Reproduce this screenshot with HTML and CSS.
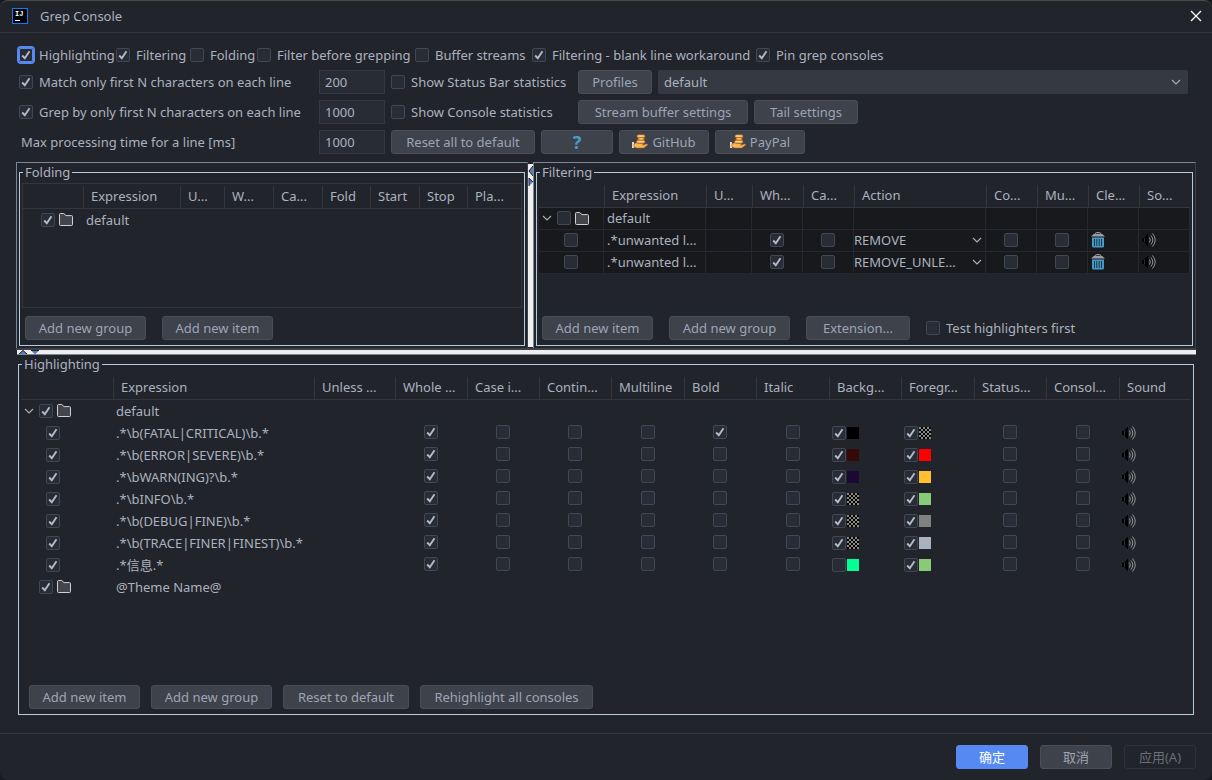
FILE: index.html
```html
<!DOCTYPE html>
<html lang="zh-CN">
<head>
<meta charset="utf-8">
<title>Grep Console</title>
<link rel="stylesheet" href="styles.css">
</head>
<body>
<svg class="sprite" aria-hidden="true">
  <symbol id="folder" viewBox="0 0 14 13"><path d="M.5 1.5a1 1 0 0 1 1-1h3.2L7 2.6h5.5a1 1 0 0 1 1 1v7.9a1 1 0 0 1-1 1h-11a1 1 0 0 1-1-1z" fill="#43454a" stroke="#ced0d6"/></symbol>
  <symbol id="chevron" viewBox="0 0 10 6"><path d="M1 1l4 4 4-4" fill="none" stroke="#a9adb4" stroke-width="1.2"/></symbol>
  <symbol id="trash" viewBox="0 0 14 16"><path d="M4.500 2V1.500q0-1 1-1h3q1 0 1 1V2" fill="none" stroke="#9a9fa3"/><path d="M3 1.800h8l3 2.700H0z" fill="#9a9fa3"/><path d="M1 5.500h12V14q0 1.500-1.500 1.500h-9Q1 15.500 1 14z" fill="#469ac9"/><path d="M3.500 7v7M5.800 7v7M8.200 7v7M10.500 7v7" stroke="#1b3444"/></symbol>
  <symbol id="sound" viewBox="0 0 14 14"><path d="M0 5h2l4-4.500v13L2 9H0z" fill="#000"/><path d="M2.500 5v4" stroke="#4a4c50" stroke-width=".6"/><path d="M7.500 4.500q1.500 2.500 0 5M9 2.500q3.500 4.500 0 9M10.500.5q5.500 6.500 0 13" fill="none" stroke="#b0b1b3" stroke-width=".8"/></symbol>
  <symbol id="coins" viewBox="0 0 16 16"><path d="M1 8v6" stroke="#f6ead8" stroke-width="1.800"/><path d="M2 10q2.500-2 5-.5h3.500q1 .8 0 1.800l4-1.300q1.800 0 .8 1.300L11.500 14H5l-3-1z" fill="#f8b85a" stroke="#b8641b" stroke-width=".6"/><rect x="5" y=".8" width="8" height="2.800" rx="1.400" fill="#f8bd62" stroke="#ab5c18" stroke-width=".6"/><rect x="5.800" y="3.600" width="6.500" height="2.600" rx="1.300" fill="#f0a03a" stroke="#ab5c18" stroke-width=".6"/><rect x="4.500" y="6.200" width="8.500" height="3" rx="1.500" fill="#f8bd62" stroke="#ab5c18" stroke-width=".6"/><path d="M6.500 2h4M7.500 4.800h3M6.500 7.600h4" stroke="#ffe9b8" stroke-width=".8"/></symbol>
</svg>

<div class="dialog">
  <header class="titlebar">
    <svg class="logo" viewBox="0 0 16 16" role="img" aria-label="IntelliJ IDEA"><rect x=".5" y=".5" width="15" height="15" fill="#000" stroke="#087cfa"/><text class="logo-text" x="3" y="8">IJ</text><rect x="3" y="12" width="5" height="1" fill="#fff"/></svg>
    <h1 class="title">Grep Console</h1>
    <button class="close" aria-label="Close"><svg viewBox="0 0 12 12"><path d="M1 1l10 10M11 1L1 11" stroke="#fff" stroke-width="1.300"/></svg></button>
  </header>

  <main class="content">
    <section class="options">
      <div class="switches">
        <label class="check"><input type="checkbox" class="focused" checked>Highlighting</label>
        <label class="check"><input type="checkbox" checked>Filtering</label>
        <label class="check"><input type="checkbox">Folding</label>
        <label class="check"><input type="checkbox">Filter before grepping</label>
        <label class="check"><input type="checkbox">Buffer streams</label>
        <label class="check"><input type="checkbox" checked>Filtering - blank line workaround</label>
        <label class="check"><input type="checkbox" checked>Pin grep consoles</label>
      </div>
      <div class="option-row">
        <label class="check"><input type="checkbox" checked>Match only first N characters on each line</label>
        <input class="field" type="text" value="200" aria-label="Match length">
        <div class="option-rest">
          <label class="check stat"><input type="checkbox">Show Status Bar statistics</label>
          <button class="btn w-s">Profiles</button>
          <span class="combo"><select aria-label="Profile"><option>default</option></select><svg class="chev"><use href="#chevron"/></svg></span>
        </div>
      </div>
      <div class="option-row">
        <label class="check"><input type="checkbox" checked>Grep by only first N characters on each line</label>
        <input class="field" type="text" value="1000" aria-label="Grep length">
        <div class="option-rest">
          <label class="check stat"><input type="checkbox">Show Console statistics</label>
          <button class="btn w-xxl">Stream buffer settings</button>
          <button class="btn w-m">Tail settings</button>
        </div>
      </div>
      <div class="option-row">
        <label class="plain" for="max-time">Max processing time for a line [ms]</label>
        <input class="field" id="max-time" type="text" value="1000">
        <div class="option-rest">
          <button class="btn w-xl">Reset all to default</button>
          <button class="btn w-f help" aria-label="Help">?</button>
          <button class="btn w-icon"><svg class="coins"><use href="#coins"/></svg>GitHub</button>
          <button class="btn w-icon"><svg class="coins"><use href="#coins"/></svg>PayPal</button>
        </div>
      </div>
    </section>

    <div class="split">
      <section class="pane">
        <fieldset class="group">
          <legend>Folding</legend>
          <div class="table-wrap boxed">
            <table class="grid">
              <colgroup><col class="c60"><col><col class="c44"><col class="c49"><col class="c49"><col class="c48"><col class="c49"><col class="c48"><col class="c54"></colgroup>
              <thead><tr><th></th><th>Expression</th><th>U...</th><th>W...</th><th>Ca...</th><th>Fold</th><th>Start</th><th>Stop</th><th>Pla...</th></tr></thead>
              <tbody><tr><td><span class="tree leaf-group"><input type="checkbox" checked aria-label="Enable default"><svg class="folder"><use href="#folder"/></svg></span></td><td colspan="8">default</td></tr></tbody>
            </table>
          </div>
          <div class="actions wide"><button class="btn w-l">Add new group</button><button class="btn w-ml">Add new item</button></div>
        </fieldset>
      </section>
      <div class="divider-v"><svg viewBox="0 0 5 24"><path d="M5 2L1 7l4 5z" fill="#5b7cc4"/><path d="M5 2L1 7l4 5" fill="none" stroke="#222"/><path d="M1 14l4 4-4 4z" fill="#5b7cc4"/><path d="M1 22v-8l4 4" fill="none" stroke="#222"/></svg></div>
      <section class="pane">
        <fieldset class="group">
          <legend>Filtering</legend>
          <div class="table-wrap">
            <table class="grid dark">
              <colgroup><col class="c65"><col><col class="c46"><col class="c51"><col class="c51"><col class="c132"><col class="c51"><col class="c51"><col class="c51"><col class="c51"></colgroup>
              <thead><tr><th></th><th>Expression</th><th>U...</th><th>Wh...</th><th>Ca...</th><th>Action</th><th>Co...</th><th>Mu...</th><th>Cle...</th><th>So...</th></tr></thead>
              <tbody>
                <tr><td><span class="tree"><svg class="chev"><use href="#chevron"/></svg><input type="checkbox" aria-label="Enable default"><svg class="folder"><use href="#folder"/></svg></span></td><td>default</td><td></td><td></td><td></td><td></td><td></td><td></td><td></td><td></td></tr>
                <tr><td class="enable"><input type="checkbox" aria-label="Enable filter 1"></td><td>.*unwanted l...</td><td></td><td class="center"><input type="checkbox" checked aria-label="Whole line"></td><td class="center"><input type="checkbox" aria-label="Case insensitive"></td><td class="flush"><span class="cell-combo"><select aria-label="Action"><option>REMOVE</option></select><svg class="chev"><use href="#chevron"/></svg></span></td><td class="center"><input type="checkbox" aria-label="Continue matching"></td><td class="center"><input type="checkbox" aria-label="Multiline"></td><td><button class="icon-btn" aria-label="Clear console"><svg class="trash"><use href="#trash"/></svg></button></td><td><button class="icon-btn" aria-label="Sound"><svg class="sound"><use href="#sound"/></svg></button></td></tr>
                <tr><td class="enable"><input type="checkbox" aria-label="Enable filter 2"></td><td>.*unwanted l...</td><td></td><td class="center"><input type="checkbox" checked aria-label="Whole line"></td><td class="center"><input type="checkbox" aria-label="Case insensitive"></td><td class="flush"><span class="cell-combo"><select aria-label="Action"><option>REMOVE_UNLE...</option></select><svg class="chev"><use href="#chevron"/></svg></span></td><td class="center"><input type="checkbox" aria-label="Continue matching"></td><td class="center"><input type="checkbox" aria-label="Multiline"></td><td><button class="icon-btn" aria-label="Clear console"><svg class="trash"><use href="#trash"/></svg></button></td><td><button class="icon-btn" aria-label="Sound"><svg class="sound"><use href="#sound"/></svg></button></td></tr>
              </tbody>
            </table>
          </div>
          <div class="actions wide"><button class="btn w-ml">Add new item</button><button class="btn w-l">Add new group</button><button class="btn w-m">Extension...</button><label class="check"><input type="checkbox">Test highlighters first</label></div>
        </fieldset>
      </section>
    </div>
    <div class="divider-h"><svg viewBox="0 0 24 4"><path d="M2 4l4-4 4 4z" fill="#5b7cc4"/><path d="M2 4l4-3.500L10 4" fill="none" stroke="#222"/><path d="M14 .5h8L18 4.500z" fill="#5b7cc4"/><path d="M14 .5h8" stroke="#222"/></svg></div>

    <section class="bottom">
      <fieldset class="group">
        <legend>Highlighting</legend>
        <div class="table-wrap">
          <table class="grid">
            <colgroup><col class="c92"><col><col class="c81"><col class="c72"><col class="c72"><col class="c72"><col class="c73"><col class="c72"><col class="c73"><col class="c72"><col class="c73"><col class="c72"><col class="c73"><col class="c72"></colgroup>
            <thead><tr><th></th><th>Expression</th><th>Unless ...</th><th>Whole ...</th><th>Case i...</th><th>Contin...</th><th>Multiline</th><th>Bold</th><th>Italic</th><th>Backg...</th><th>Foregr...</th><th>Status...</th><th>Consol...</th><th>Sound</th></tr></thead>
            <tbody id="rules">
              <tr><td><span class="tree"><svg class="chev"><use href="#chevron"/></svg><input type="checkbox" checked aria-label="Enable default"><svg class="folder"><use href="#folder"/></svg></span></td><td colspan="13">default</td></tr>
              <tr id="theme"><td><span class="tree leaf-group"><input type="checkbox" checked aria-label="Enable @Theme Name@"><svg class="folder"><use href="#folder"/></svg></span></td><td colspan="13">@Theme Name@</td></tr>
            </tbody>
          </table>
        </div>
        <div class="actions"><button class="btn w-ml">Add new item</button><button class="btn w-l">Add new group</button><button class="btn w-lg">Reset to default</button><button class="btn w-xxxl">Rehighlight all consoles</button></div>
      </fieldset>
    </section>
  </main>

  <footer class="footer">
    <button class="btn w-f primary">确定</button>
    <button class="btn w-f">取消</button>
    <button class="btn w-f" disabled>应用(A)</button>
  </footer>
</div>
<script src="rules.js"></script>
</body>
</html>
```
FILE: styles.css
```css
* { box-sizing: border-box; }

body {
  margin: 0;
  background: #17181b;
  color: #abb2bf;
  font: 13px/18px "Noto Sans", "Noto Sans CJK SC", sans-serif;
}

button, input, select { font: inherit; color: inherit; margin: 0; padding: 0; }
svg { display: block; flex: none; }
.sprite { position: absolute; width: 0; height: 0; }

.dialog {
  display: flex;
  flex-direction: column;
  min-height: 100vh;
  background: #21242b;
  border-top: 1px solid #4a4a46;
  border-radius: 8px;
}

.titlebar {
  display: flex;
  align-items: center;
  gap: 12px;
  height: 32px;
  padding: 0 10px 1px 12px;
  border-bottom: 1px solid #33363d;
}
.logo { width: 16px; height: 16px; }
.logo-text { font: bold 7px "Liberation Mono", monospace; fill: #fff; }
.title { flex: 1; margin: 0; font-size: 13px; line-height: 18px; font-weight: 400; }
.close { padding: 0; border: 0; background: none; }
.close svg { width: 12px; height: 12px; }

.content { flex: 1; display: flex; flex-direction: column; padding: 13px 16px 18px; }

/* Option rows */
.options { display: flex; flex-direction: column; gap: 6px; padding: 0 8px 8px 3px; }
.switches { display: grid; grid-template-columns: 97px 74px 67px 158px 117px 224px 1fr; height: 18px; }
.option-row { display: grid; grid-template-columns: 300px 66px 1fr; height: 24px; align-items: center; }
.option-rest { display: flex; align-items: center; gap: 6px; padding-left: 6px; }
.stat { width: 181px; }
.plain { padding-left: 2px; }
.check { display: flex; align-items: center; gap: 6px; white-space: nowrap; }

input[type="checkbox"] {
  appearance: none;
  flex: none;
  display: block;
  width: 14px;
  height: 14px;
  border: 1px solid #414754;
  border-radius: 2px;
  background: #282c34;
}
input[type="checkbox"]:checked {
  background: #282c34 url("data:image/svg+xml,%3Csvg xmlns='http://www.w3.org/2000/svg' viewBox='0 0 12 12'%3E%3Cpath d='M2.200 6.500L4.800 9.200 9.500 2.200' fill='none' stroke='%23b4bac7' stroke-width='1.900'/%3E%3C/svg%3E") center / 12px 12px no-repeat;
}
input.focused { border-color: #568af2; outline: 2px solid #568af2; }

.field {
  width: 66px;
  height: 24px;
  padding: 0 5px;
  border: 1px solid #333841;
  background: #282c34;
}

.btn {
  display: flex;
  align-items: center;
  justify-content: center;
  gap: 4px;
  flex: none;
  height: 24px;
  border: 1px solid #494e58;
  border-radius: 3px;
  background: #3d424b;
  color: #9da5b4;
  white-space: nowrap;
}
.w-s { width: 74px; }
.w-f { width: 72px; }
.w-icon { width: 90px; }
.w-m { width: 104px; }
.w-ml { width: 111px; }
.w-l { width: 121px; }
.w-lg { width: 126px; }
.w-xl { width: 144px; }
.w-xxl { width: 170px; }
.w-xxxl { width: 173px; }
.help { color: #4a9cc5; font-size: 18px; font-weight: 700; }
.coins { width: 16px; height: 16px; }
.primary { background: #568af2; border-color: #568af2; color: #fff; }
.btn:disabled { background: none; border-color: #2e3138; color: #6a6f78; }

.combo { display: flex; align-items: center; flex: 1; height: 24px; padding-right: 7px; border-radius: 2px; background: #353941; }
.combo select, .cell-combo select { appearance: none; flex: 1; min-width: 0; border: 0; background: none; }
.combo select { padding-left: 6px; }
.cell-combo { display: flex; align-items: center; padding-right: 3px; }
.chev { width: 10px; height: 6px; }

/* Upper split pane */
.split { display: grid; grid-template-columns: 512fr 5px 663fr; border-bottom: 2px solid #3e4045; }
.pane { min-width: 0; padding: 0 2px 2px; border: 1px solid #3e4045; border-top-color: #7b8794; border-left-color: #7b8794; border-bottom: 0; }
.divider-v { margin: 2px 0 1px; background: #eee; }
.divider-v svg { width: 5px; height: 24px; }
.divider-h { height: 5px; margin-left: 1px; background: #eee; border-bottom: 1px solid #7b8794; }
.divider-h svg { width: 24px; height: 4px; }
.bottom { flex: 1; display: flex; padding: 0 2px; }

.group {
  display: flex;
  flex-direction: column;
  flex: 1;
  min-width: 0;
  margin: 0;
  padding: 1px 2px 5px;
  border: 1px solid #b4cbe0;
}
.group legend { height: 19px; margin-left: 1px; padding: 0 2px; line-height: 19px; }
.table-wrap { flex: 1; min-height: 125px; }
.boxed { border: 1px solid #33363d; }
.actions { display: flex; align-items: center; gap: 11px; padding: 8px 8px 0; }
.wide { gap: 16px; padding: 8px 3px 0; }

/* Tables */
.grid { width: 100%; table-layout: fixed; border-collapse: separate; border-spacing: 0; }
.grid th {
  height: 25px;
  padding: 0 0 0 8px;
  border-bottom: 1px solid #33363d;
  background: linear-gradient(#33363d, #33363d) left 2px / 1px 22px no-repeat;
  font-weight: 400;
  text-align: left;
  white-space: nowrap;
}
.grid th:first-child { background: none; }
.grid td { height: 22px; padding: 0 0 1px 3px; white-space: nowrap; }
.grid td.center { padding: 0 0 2px; }
.grid td.center input { margin: 0 auto; }
.grid td.flush { padding: 0 0 1px; }
.dark td { background: #18191d; border-right: 1px solid #25282e; border-bottom: 1px solid #25282e; }
.tree { display: flex; align-items: center; gap: 4px; }
.tree .chev { margin-right: 1px; }
.leaf-group { padding-left: 15px; }
.folder { width: 14px; height: 13px; }
.enable input { margin-left: 22px; }
.paint { display: flex; align-items: center; gap: 1px; }
.swatch { width: 12px; height: 12px; background: var(--paint); }
.swatch.checker { background: repeating-conic-gradient(#000 0 25%, #8c8c86 0 50%) 0 0 / 4px 4px; }
.icon-btn { display: block; border: 0; background: none; }
.trash { width: 14px; height: 16px; }
.sound { width: 14px; height: 14px; }

.c44 { width: 44px; } .c46 { width: 46px; } .c48 { width: 48px; } .c49 { width: 49px; }
.c51 { width: 51px; } .c54 { width: 54px; } .c60 { width: 60px; } .c65 { width: 65px; }
.c72 { width: 72px; } .c73 { width: 73px; } .c81 { width: 81px; } .c92 { width: 92px; }
.c132 { width: 132px; }

.footer {
  display: flex;
  justify-content: flex-end;
  gap: 12px;
  height: 47px;
  padding: 11px 16px 0;
  border-top: 1px solid #33363d;
}
```
FILE: rules.js
```js
const rules = [
  { expr: ".*\\b(FATAL|CRITICAL)\\b.*", bold: true, back: "#000000", fore: null },
  { expr: ".*\\b(ERROR|SEVERE)\\b.*", back: "#370808", fore: "#ff0000" },
  { expr: ".*\\bWARN(ING)?\\b.*", back: "#1b0833", fore: "#ffc02f" },
  { expr: ".*\\bINFO\\b.*", back: null, fore: "#89ca78" },
  { expr: ".*\\b(DEBUG|FINE)\\b.*", back: null, fore: "#808080" },
  { expr: ".*\\b(TRACE|FINER|FINEST)\\b.*", back: null, fore: "#abb2bf" },
  { expr: ".*信息.*", back: "#00ff95", backOff: true, fore: "#89ca78" }
];

const box = (name, on) => `<input type="checkbox" aria-label="${name}"${on ? " checked" : ""}>`;
const cell = (name, on) => `<td class="center">${box(name, on)}</td>`;
const paint = (name, on, color) =>
  `<td><span class="paint">${box(name, on)}${color
    ? `<span class="swatch" style="--paint:${color}"></span>`
    : `<span class="swatch checker"></span>`}</span></td>`;

document.getElementById("theme").insertAdjacentHTML("beforebegin", rules.map(r => `<tr>
  <td class="enable">${box("Enable rule", true)}</td>
  <td>${r.expr}</td><td></td>
  ${cell("Whole line", true)}${cell("Case insensitive")}${cell("Continue matching")}${cell("Multiline")}
  ${cell("Bold", r.bold)}${cell("Italic")}
  ${paint("Background", !r.backOff, r.back)}${paint("Foreground", true, r.fore)}
  ${cell("Status bar")}${cell("Console")}
  <td><button class="icon-btn" aria-label="Sound"><svg class="sound"><use href="#sound"/></svg></button></td>
</tr>`).join(""));
```
